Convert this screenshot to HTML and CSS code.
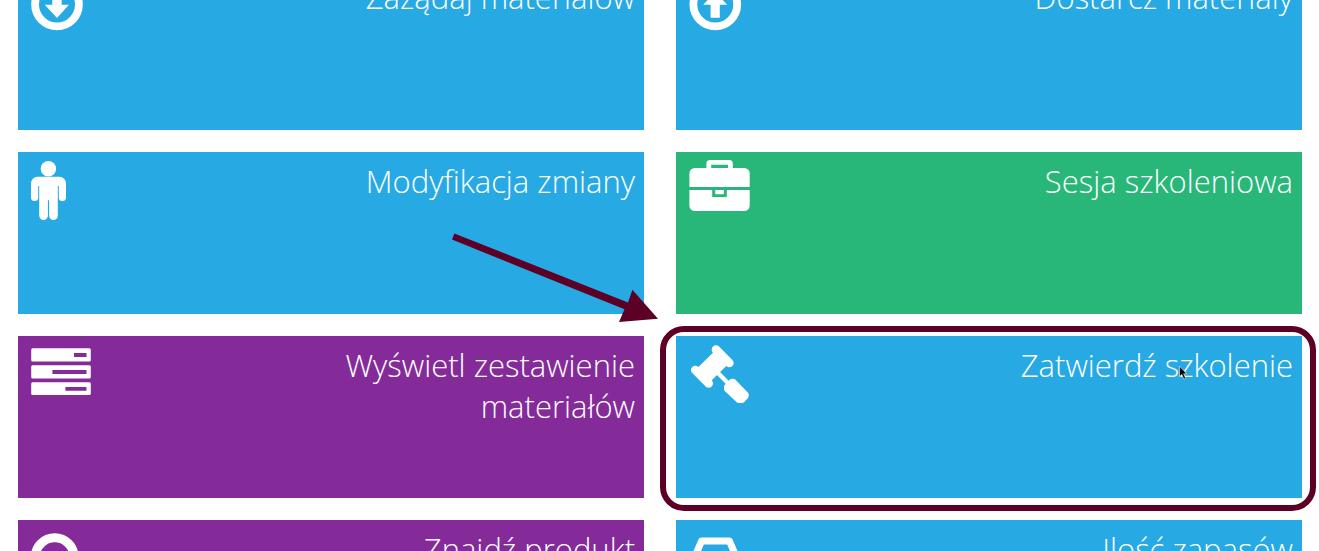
FILE: index.html
```html
<!DOCTYPE html>
<html lang="pl">
<head>
<meta charset="utf-8">
<title>Panel</title>
<link rel="stylesheet" href="styles.css">
</head>
<body>
<main class="tiles">
  <a class="tile blue" href="#zazadaj">
    <svg class="icon" viewBox="9 9 72 64" aria-hidden="true"><circle cx="39" cy="36.500" r="21.900" fill="none" stroke="#fff" stroke-width="7.800"/><path d="M34.300 23.500h9.400v13.300h7.200L39 50 26.800 36.800h7.500z"/></svg>
    <span class="title">Zażądaj materiałów</span>
  </a>
  <a class="tile blue" href="#dostarcz">
    <svg class="icon" viewBox="9 9 72 64" aria-hidden="true"><circle cx="39.300" cy="36.500" r="21.900" fill="none" stroke="#fff" stroke-width="7.800"/><path d="M34.600 49.700h9.200V36.800h7.400L39.300 24 27.200 36.800h7.400z"/></svg>
    <span class="title">Dostarcz materiały</span>
  </a>
  <a class="tile blue" href="#zmiana">
    <svg class="icon" viewBox="9 9 72 64" aria-hidden="true"><circle cx="30.400" cy="16.700" r="7.700"/><path d="M19.500 24.800h22a6.500 6.500 0 0 1 6.500 6.500v14.200a3.600 3.600 0 0 1-7.200 0V34h-1v29.600a4.300 4.300 0 0 1-8.700 0V48.200h-1.200v15.400a4.300 4.300 0 0 1-8.700 0V34h-1v11.500a3.600 3.600 0 0 1-7.200 0V31.300a6.500 6.500 0 0 1 6.500-6.500z"/></svg>
    <span class="title">Modyfikacja zmiany</span>
    <svg class="arrow" viewBox="444 232 220 95" aria-hidden="true"><path d="M454.400 233.400L628 302.600 632.400 289.800 658 318.800 619 322 624.500 309.200 452 239.600z"/></svg>
  </a>
  <a class="tile green" href="#sesja">
    <svg class="icon" viewBox="9 9 72 64" aria-hidden="true"><path fill-rule="evenodd" d="M30.400 16v-4.500a3.500 3.500 0 0 1 3.500-3.500h19.400a3.500 3.500 0 0 1 3.500 3.500V16h11.400a5.500 5.500 0 0 1 5.500 5.500V35H13.400V21.500a5.500 5.500 0 0 1 5.500-5.500zM35.200 12.700V16h16.800v-3.300zM13.400 38h22.800v7h14.600v-7h22.900v15.500a5.500 5.500 0 0 1-5.500 5.500H18.900a5.500 5.500 0 0 1-5.500-5.500z"/><path d="M39.200 38h8.600v4.200h-8.600z"/></svg>
    <span class="title">Sesja szkoleniowa</span>
  </a>
  <a class="tile purple" href="#zestawienie">
    <svg class="icon" viewBox="9 9 72 64" aria-hidden="true"><g><rect x="13.200" y="12.300" width="59.600" height="13.200" rx="1.500"/><rect x="13.200" y="29.300" width="59.600" height="13.200" rx="1.500"/><rect x="13.200" y="46.200" width="59.600" height="12.800" rx="1.500"/></g><path class="slots" d="M56 17h12.500v4H56zM34.400 34h34.100v4H34.400zM47.400 51h21.100v3.700H47.400z"/></svg>
    <span class="title">Wyświetl zestawienie materiałów</span>
  </a>
  <a class="tile blue highlighted" href="#zatwierdz">
    <svg class="icon" viewBox="9 9 72 64" aria-hidden="true"><g transform="translate(-21 -16) scale(.33333)" stroke="#fff" stroke-linecap="round" stroke-linejoin="round"><path stroke-width="26" d="M183 89l40 40M121 150l40 40"/><path stroke="none" d="M183 89l40 40-62 61-40-40z"/><path stroke-width="13" d="M186 156l38 38"/><path stroke-width="14" d="M214 200v8l36 34h12l12-13v-6l-39-40h-5z"/></g></svg>
    <span class="title">Zatwierdź szkolenie</span>
    <svg class="pointer" viewBox="0 0 10 16" aria-hidden="true"><path d="M1.500 1v10.500l2.300-2 2 4.700 1.900-.8-2-4.600h3z" stroke="#fff" stroke-width=".6"/></svg>
  </a>
  <a class="tile purple" href="#produkt">
    <svg class="icon" viewBox="9 9 72 64" aria-hidden="true"><g fill="none" stroke="#fff"><circle cx="36.700" cy="37.200" r="19.400" stroke-width="9"/><path stroke-width="9" stroke-linecap="round" d="M51 52l15 15"/></g></svg>
    <span class="title">Znajdź produkt</span>
  </a>
  <a class="tile blue" href="#zapasy">
    <svg class="icon" viewBox="9 9 72 64" aria-hidden="true"><path fill="none" stroke="#fff" stroke-width="7" stroke-linejoin="round" d="M25.500 21h28l10.500 25v17H15V46zM15 46h14l4 8h13l4-8h14"/></svg>
    <span class="title">Ilość zapasów</span>
  </a>
</main>
</body>
</html>
```
FILE: styles.css
```css
body {
  margin: 0;
  height: 100vh;
  overflow: hidden;
  background: #fff;
  font-family: "Open Sans", sans-serif;
}

.tiles {
  display: grid;
  grid-template-columns: 1fr 1fr;
  gap: 22px 32px;
  margin-top: -32px;
  padding: 0 17px 0 18px;
}

.tile {
  position: relative;
  display: flex;
  justify-content: space-between;
  align-items: flex-start;
  box-sizing: border-box;
  min-height: 162px;
  padding: 9px;
  color: #fff;
  text-decoration: none;
}

.blue { background: #27a9e3; }
.green { background: #28b779; }
.purple { background: #852b99; }

.icon {
  flex: none;
  width: 72px;
  height: 64px;
  overflow: visible;
  fill: #fff;
}

.slots { fill: #852b99; }

.title {
  max-width: 60%;
  font-size: 31px;
  font-weight: 300;
  line-height: 41px;
  text-align: right;
}

.arrow {
  position: absolute;
  z-index: 2;
  top: 80px;
  right: -20px;
  width: 220px;
  height: 95px;
  fill: #5c0026;
}

.highlighted::after {
  content: "";
  position: absolute;
  inset: -10px -14px -13px -16px;
  border: 6px solid #5c0026;
  border-radius: 24px;
  pointer-events: none;
}

.pointer {
  position: absolute;
  top: 29px;
  right: 114px;
  width: 10px;
  height: 16px;
}
```
